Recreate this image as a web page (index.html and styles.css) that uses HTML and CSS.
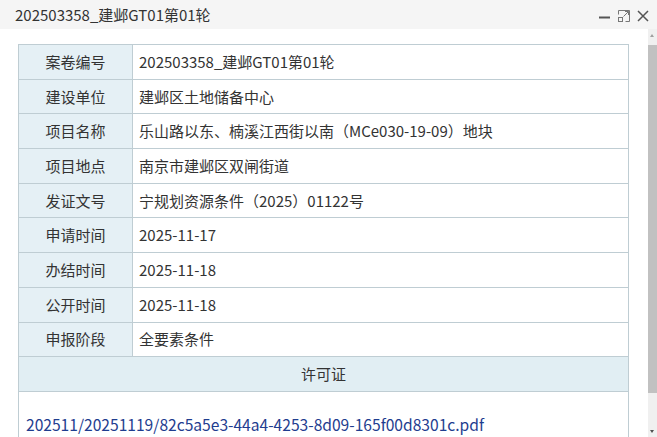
FILE: index.html
```html
<!DOCTYPE html>
<html lang="zh">
<head>
<meta charset="utf-8">
<link rel="stylesheet" href="styles.css">
</head>
<body>
<div class="win">
  <div class="titlebar">
    <span class="title">202503358_建邺GT01第01轮</span>
    <div class="tools">
      <svg class="ico" width="14" height="14" viewBox="0 0 14 14"><path d="M1 8.5H12" stroke="#555" stroke-width="2"/></svg>
      <svg class="ico" width="14" height="14" viewBox="0 0 14 14" fill="none" stroke="#777" stroke-width="1"><path d="M1.5 5.5V1.5H12.5V12.5H8.5"/><rect x="1.5" y="8.5" width="4" height="4"/><path d="M6.5 7.5L11.5 2.5M8 2.5H11.5V6"/></svg>
      <svg class="ico" width="14" height="14" viewBox="0 0 14 14"><path d="M2 2L12 12M12 2L2 12" stroke="#555" stroke-width="1.5"/></svg>
    </div>
  </div>
  <div class="body">
    <div class="content">
      <table class="info">
        <tr><th>案卷编号</th><td>202503358_建邺GT01第01轮</td></tr>
        <tr><th>建设单位</th><td>建邺区土地储备中心</td></tr>
        <tr><th>项目名称</th><td>乐山路以东、楠溪江西街以南（MCe030-19-09）地块</td></tr>
        <tr><th>项目地点</th><td>南京市建邺区双闸街道</td></tr>
        <tr><th>发证文号</th><td>宁规划资源条件（2025）01122号</td></tr>
        <tr><th>申请时间</th><td>2025-11-17</td></tr>
        <tr><th>办结时间</th><td>2025-11-18</td></tr>
        <tr><th>公开时间</th><td>2025-11-18</td></tr>
        <tr><th>申报阶段</th><td>全要素条件</td></tr>
        <tr><th colspan="2" class="sect">许可证</th></tr>
        <tr><td colspan="2" class="filecell"><a class="file" href="#">202511/20251119/82c5a5e3-44a4-4253-8d09-165f00d8301c.pdf</a></td></tr>
      </table>
    </div>
    <div class="scrollbar">
      <div class="arrow up"></div>
      <div class="thumb"></div>
      <div class="arrow down"></div>
    </div>
  </div>
</div>
</body>
</html>
```
FILE: styles.css
```css
html, body {
  margin: 0;
  padding: 0;
  overflow: hidden;
}
body {
  width: 657px;
  height: 437px;
  font-family: "Noto Sans CJK SC", "Noto Sans", sans-serif;
  color: #333;
  background: #fff;
}
.win {
  display: flex;
  flex-direction: column;
  height: 437px;
}
.titlebar {
  height: 29px;
  flex: none;
  background: #f5f5f5;
  display: flex;
  align-items: center;
  justify-content: space-between;
  padding: 0 7px 0 15px;
}
.title {
  font-size: 15px;
  color: #333;
  line-height: 1;
}
.tools {
  display: flex;
  gap: 5px;
  align-items: center;
  margin-top: 2px;
}
.ico { display: block; }
.body {
  flex: 1;
  display: flex;
  min-height: 0;
}
.content {
  flex: 1;
  padding: 15px 19px 0 18px;
  overflow: hidden;
}
.info {
  width: 100%;
  border-collapse: collapse;
  font-size: 15px;
  table-layout: fixed;
}
.info th, .info td {
  border: 1px solid #bfcdd3;
  height: 33.7px;
  padding: 0;
  line-height: 20px;
}
.info th {
  width: 113px;
  background: #e5f0f5;
  font-weight: normal;
  color: #333;
  text-align: center;
}
.info td {
  padding-left: 6px;
  color: #333;
  white-space: nowrap;
}
.info th.sect {
  width: auto;
  background: #e1eef3;
}
.info td.filecell {
  height: 60px;
  padding: 22px 0 0 7px;
  vertical-align: top;
  border-bottom: none;
}
.file {
  color: #1f3d8f;
  text-decoration: none;
  font-size: 15.6px;
}
.scrollbar {
  width: 9px;
  flex: none;
  background: #f0f0f0;
  display: flex;
  flex-direction: column;
  margin-left: auto;
}
.arrow {
  height: 14px;
  flex: none;
  position: relative;
}
.arrow.up::after, .arrow.down::after {
  content: "";
  position: absolute;
  left: 2px;
  border-left: 2.5px solid transparent;
  border-right: 2.5px solid transparent;
}
.arrow.up::after {
  top: 5px;
  border-bottom: 3px solid #a0a0a0;
}
.arrow.down::after {
  bottom: 4px;
  border-top: 3px solid #505050;
}
.thumb {
  flex: 1;
  background: #c1c1c1;
  margin: 2px 0 30px;
}
```
